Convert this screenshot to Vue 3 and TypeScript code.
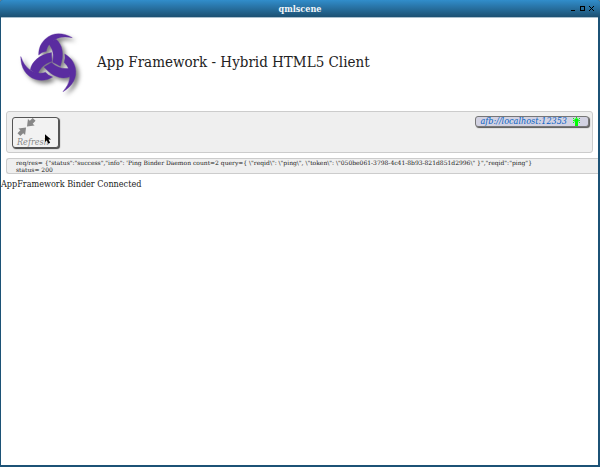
<script setup lang="ts">
import { ref } from 'vue'

const title = 'qmlscene'
const server = ref('afb://localhost:12353')
const request = ref(
  'req/res= {"status":"success","info": \'Ping Binder Daemon count=2 query={ \\"reqid\\": \\"ping\\", \\"token\\": \\"050be061-3798-4c41-8b93-821d851d2996\\" }","reqid":"ping"}'
)
const status = ref('status= 200')
const turns = [0, 120, 240]
</script>

<template>
  <div class="window">
    <header class="titlebar">
      <span class="caption">{{ title }}</span>
      <div class="controls">
        <button type="button" aria-label="Minimize">
          <svg viewBox="0 0 5 5"><path d="M0 4h4v1H0z" /></svg>
        </button>
        <button type="button" aria-label="Maximize">
          <svg viewBox="0 0 5 5"><path fill-rule="evenodd" d="M0 0h5v5H0zM1 1v3h3V1z" /></svg>
        </button>
        <button type="button" aria-label="Close">
          <svg viewBox="0 0 5 5"><path d="M0 0h1v1h1v1h1V1h1V0h1v1H4v1H3v1h1v1h1v1H4V4H3V3H2v1H1v1H0V4h1V3h1V2H1V1H0z" /></svg>
        </button>
      </div>
    </header>
    <main class="page">
      <div class="brand">
        <svg class="logo" viewBox="0 -3 240 225" aria-hidden="true">
          <g v-for="t in turns" :key="t" :transform="`rotate(${t} 126 111)`">
            <path d="M187 38C158 21 127 22 106 42C92 55 86 70 86 90Q95 81 109 79C112 62 123 49 143 40Q160 33 187 38Z" />
            <path d="M116 56Q126 47 138 43C157 58 164 88 151 124Q140 118 128 112C132 90 130 74 116 56Z" />
          </g>
        </svg>
        <h1>App Framework - Hybrid HTML5 Client</h1>
      </div>
      <section class="toolbar">
        <button type="button" class="refresh">
          <svg class="arrows" viewBox="0 0 20 20" aria-hidden="true">
            <path d="M19 3L16 0L13 3L11 1L10 9L18 8L16 6Z" />
            <path d="M0 16L3 19L6 16L8 18L9 10L1 11L3 13Z" />
          </svg>
          <span>Refresh</span>
          <svg class="pointer" viewBox="0 0 7 11" aria-hidden="true">
            <path d="M0 0V9L2 7L4 11L6 10L4 6H7Z" />
          </svg>
        </button>
        <a class="server" href="#">
          <span>{{ server }}</span>
          <svg viewBox="0 0 9 9" aria-hidden="true">
            <circle cx="4.500" cy="3.500" r="2.300" />
            <path d="M3 5H6V9H3Z" />
            <path class="rays" d="M4.500 0V1M1 3.500H2M7 3.500H8M1 1L2 2M8 1L7 2M1 6L2 5M8 6L7 5" />
          </svg>
        </a>
      </section>
      <section class="log">
        <div>{{ request }}</div>
        <div>{{ status }}</div>
      </section>
      <p class="message">AppFramework Binder Connected</p>
    </main>
  </div>
</template>

<style>
body {
  background: #77838a;
}
</style>

<style scoped>
.window {
  box-sizing: border-box;
  min-height: 100vh;
  display: flex;
  flex-direction: column;
  background: #1c5276;
  border-radius: 3px 3px 0 0;
  font-family: "DejaVu Serif Condensed", "DejaVu Serif", serif;
  font-stretch: condensed;
  color: #222;
}
.titlebar {
  display: grid;
  grid-template-columns: 1fr auto 1fr;
  align-items: center;
  height: 17px;
  box-sizing: border-box;
  padding: 0 6px;
  border-radius: 3px 3px 0 0;
  background: linear-gradient(#318dcb, #1c5072);
}
.caption {
  grid-column: 2;
  color: #f2f6f9;
  font-size: 9px;
  font-weight: bold;
}
.controls {
  display: flex;
  justify-content: flex-end;
  gap: 4px;
}
.controls button {
  width: 5px;
  height: 5px;
  padding: 0;
  border: 0;
  background: none;
  display: flex;
}
.controls svg {
  width: 5px;
  height: 5px;
}
.page {
  flex: 1;
  margin: 0 2px 2px 1px;
  background: #fff;
  border-top: 1px solid #a9bfcd;
  overflow: hidden;
}
.brand {
  display: flex;
  align-items: center;
  gap: 7px;
  padding: 6px 0 12px 9px;
}
.logo {
  width: 80px;
  height: 75px;
  flex: none;
  fill: #5a2ca0;
  stroke: #5a2ca0;
  stroke-width: 1px;
  overflow: visible;
  filter: drop-shadow(3px 3px 2px rgba(0, 0, 0, 0.5));
}
h1 {
  margin: 0;
  font-size: 15px;
  font-weight: normal;
}
.toolbar {
  display: flex;
  align-items: flex-start;
  justify-content: space-between;
  box-sizing: border-box;
  height: 42px;
  margin: 0 5px;
  padding: 4px 3px 4px 5px;
  background: #efefef;
  border: 1px solid #ccc;
  border-radius: 3px;
}
.refresh {
  position: relative;
  display: flex;
  flex-direction: column;
  align-items: flex-start;
  box-sizing: border-box;
  width: 47px;
  height: 31px;
  margin-top: 1px;
  padding: 0 4px;
  border: 1px solid #555;
  border-radius: 3px;
  background: #f2f2f2;
  box-shadow: 1px 1px 1px #444;
  color: #888;
  font: italic 9px/10px "DejaVu Serif Condensed", "DejaVu Serif", serif;
  font-stretch: condensed;
}
.arrows {
  width: 20px;
  height: 20px;
  fill: #888;
}
.pointer {
  position: absolute;
  left: 32px;
  top: 16px;
  width: 6px;
  height: 10px;
  fill: #000;
}
.server {
  display: flex;
  align-items: center;
  gap: 5px;
  box-sizing: border-box;
  height: 11px;
  padding: 0 7px 0 4px;
  border: 1px solid #777;
  border-radius: 3px;
  background: #d2d2e2;
  box-shadow: 1px 1px 1px #555;
  color: #0a62c4;
  font-size: 9px;
  line-height: 9px;
  font-style: italic;
  text-decoration: none;
}
.server svg {
  width: 9px;
  height: 9px;
  fill: #0f0;
}
.rays {
  stroke: #0f0;
  stroke-width: 1px;
}
.log {
  margin: 5px 0 0 5px;
  padding: 0 0 0 9px;
  background: #efefef;
  border: 1px solid #ccc;
  border-right: 0;
  border-radius: 3px 0 0 3px;
  font-family: "DejaVu Serif", serif;
  font-stretch: normal;
  font-size: 6px;
  line-height: 7px;
  white-space: nowrap;
}
.message {
  margin: 4px 0 0;
  font-size: 9px;
  line-height: 13px;
}
</style>
